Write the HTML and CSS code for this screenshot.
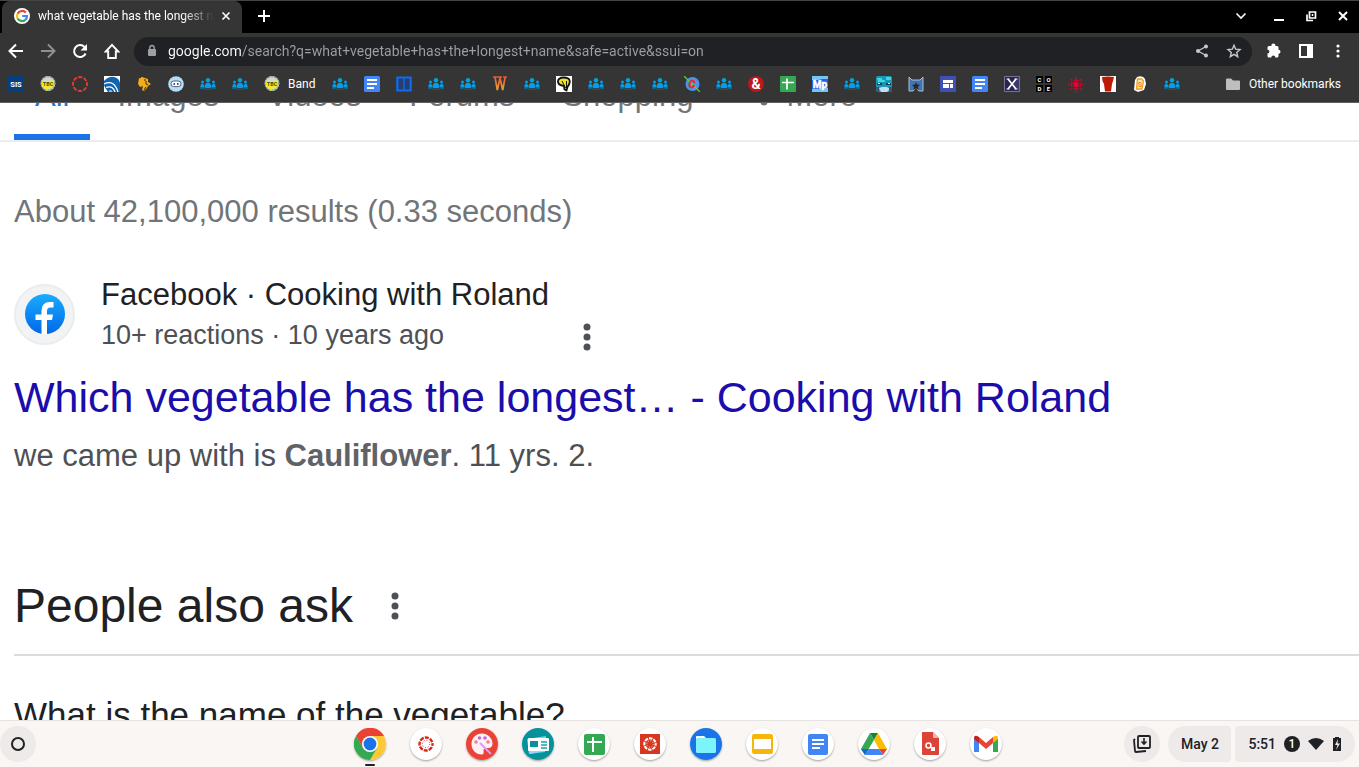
FILE: index.html
```
<!DOCTYPE html>
<html lang="en">
  <head>
    <meta charset="utf-8">
    <title>what vegetable has the longest name - Google Search</title>
    <link rel="stylesheet" href="styles.css">
  </head>
  <body>
    <!-- Shared icons -->
    <svg class="sprite" aria-hidden="true">
      <symbol id="people" viewBox="0 0 16 16">
        <g fill="#089de3">
          <circle cx="8" cy="4.200" r="2.200"/><path d="M4.600 10.500c0-5 6.800-5 6.800 0L10.500 12h-5z"/>
          <circle cx="2.500" cy="5.900" r="1.500"/><path d="M.3 11.500c-.3-5 4.200-5 4.200 0z"/>
          <circle cx="13.500" cy="5.900" r="1.500"/><path d="M11.500 11.500c0-5 4.500-5 4.200 0z"/>
        </g>
        <path d="M0 12.400q8 1.800 16 0" fill="none" stroke="#17658c" stroke-width="1"/>
      </symbol>
      <symbol id="tbc" viewBox="0 0 16 16">
        <circle cx="8" cy="7.500" r="7.400" fill="#d3d8cf"/>
        <circle cx="8" cy="7.500" r="6.600" fill="none" stroke="#7f9487" stroke-width="1" stroke-dasharray="2 1"/>
        <path d="M1.500 5.500L14 4.500l-1 6-4 1.500-2.500 3-1.500-4-3-.5z" fill="#f6ee10"/>
        <text x="8" y="9.500" font-size="5.500" text-anchor="middle" class="icon-text" fill="#3b4a20">TBC</text>
      </symbol>
      <symbol id="docs" viewBox="0 0 16 16">
        <rect width="16" height="16" rx="1.500" fill="#4285f4"/>
        <path d="M3 4h10M3 8h10M3 12h7" stroke="#fff" stroke-width="1.800"/>
      </symbol>
      <symbol id="sheets" viewBox="0 0 16 16">
        <rect width="16" height="16" rx="1" fill="#34a853"/>
        <path d="M2 6.500h12M7 2.500v11" stroke="#fff" stroke-width="1.700"/>
      </symbol>
      <symbol id="kebab" viewBox="0 0 8 28">
        <circle cx="4" cy="4" r="3.500"/><circle cx="4" cy="14" r="3.500"/><circle cx="4" cy="24" r="3.500"/>
      </symbol>
      <symbol id="canvas" viewBox="0 0 16 16">
        <circle cx="8" cy="8" r="6.500" fill="none" stroke="currentColor" stroke-width="2.400" stroke-dasharray="4 1.105" stroke-dashoffset="2"/>
        <circle cx="8" cy="8" r="3.700" fill="none" stroke="currentColor" stroke-width="1" stroke-dasharray="1 1.906"/>
      </symbol>
    </svg>

    <header class="browser">
      <div class="tab-strip">
        <div class="tab">
          <svg width="16" height="16" viewBox="0 0 16 16">
            <circle cx="8" cy="8" r="8" fill="#fff" stroke="none"/>
            <g fill="none" stroke-width="2.200">
              <path d="M11.800 4.600A5 5 0 0 0 3.600 5.700" stroke="#ea4335"/>
              <path d="M3.600 5.700a5 5 0 0 0 0 4.700" stroke="#fbbc05"/>
              <path d="M3.600 10.400a5 5 0 0 0 7.700 1.400" stroke="#34a853"/>
              <path d="M11.300 11.800A5 5 0 0 0 13 8H8.200" stroke="#4285f4"/>
            </g>
          </svg>
          <span class="tab-title">what vegetable has the longest name - Google Search</span>
          <button class="tab-close" aria-label="Close tab">
            <svg width="16" height="16" viewBox="0 0 16 16"><path d="M4.500 4.500l7 7M11.500 4.500l-7 7"/></svg>
          </button>
        </div>
        <button class="new-tab" aria-label="New tab">
          <svg width="16" height="16" viewBox="0 0 16 16"><path d="M8 2v12M2 8h12" stroke-width="2"/></svg>
        </button>
        <div class="window-buttons">
          <button class="tab-search" aria-label="Search tabs">
            <svg width="16" height="16" viewBox="0 0 16 16"><path d="M3.500 5.500L8 10l4.500-4.500"/></svg>
          </button>
          <button aria-label="Minimize">
            <svg width="16" height="16" viewBox="0 0 16 16"><path d="M3 12h10" stroke-width="2"/></svg>
          </button>
          <button aria-label="Restore">
            <svg width="16" height="16" viewBox="0 0 16 16"><path d="M6.500 4h6v6h-6zM4 6.500v6h6" stroke-width="1.700"/><path d="M9.500 6v2" stroke-width="1.500"/></svg>
          </button>
          <button aria-label="Close">
            <svg width="16" height="16" viewBox="0 0 16 16"><path d="M4 4l8 8M12 4l-8 8" stroke-width="2"/></svg>
          </button>
        </div>
      </div>

      <div class="toolbar">
        <button aria-label="Back">
          <svg width="16" height="16" viewBox="0 0 16 16"><path d="M15 8H2M8 1.500L1.500 8 8 14.500" stroke-width="2"/></svg>
        </button>
        <button class="disabled" aria-label="Forward" disabled>
          <svg width="16" height="16" viewBox="0 0 16 16"><path d="M1 8h13M8 1.500L14.500 8 8 14.500" stroke-width="2"/></svg>
        </button>
        <button aria-label="Reload">
          <svg width="16" height="16" viewBox="0 0 16 16"><path d="M13.600 10.500A6 6 0 1 1 12.500 4" stroke-width="2"/><path d="M15 1v6.500H8.500z" fill="#fff" stroke="none"/></svg>
        </button>
        <button aria-label="Home">
          <svg width="16" height="16" viewBox="0 0 16 16"><path d="M8 1.800L1.800 8.500h2.400V15h7.600V8.500h2.400z" stroke-width="1.900"/></svg>
        </button>
        <div class="omnibox">
          <svg width="16" height="16" viewBox="0 0 16 16"><rect x="4" y="6" width="8" height="7" rx="1" fill="#9aa0a6" stroke="none"/><path d="M5.800 6.500V4.700a2.200 2.200 0 0 1 4.400 0v1.800" stroke="#9aa0a6" stroke-width="1.400"/></svg>
          <input class="url" type="text" aria-label="Address" value="google.com/search?q=what+vegetable+has+the+longest+name&amp;safe=active&amp;ssui=on">
          <button aria-label="Share">
            <svg width="16" height="16" viewBox="0 0 16 16"><path d="M12 3.500L4 8l8 4.500" stroke="#c8c8c8" stroke-width="1.300"/><g fill="#c8c8c8" stroke="none"><circle cx="12" cy="3.500" r="2"/><circle cx="4" cy="8" r="2"/><circle cx="12" cy="12.500" r="2"/></g></svg>
          </button>
          <button aria-label="Bookmark this page">
            <svg width="16" height="16" viewBox="0 0 16 16"><path d="M8 2.200l1.700 4 4.300.4-3.300 2.800 1 4.300L8 11.400l-3.700 2.300 1-4.300L2 6.600l4.300-.4z" stroke="#c8c8c8" stroke-width="1.400"/></svg>
          </button>
        </div>
        <button aria-label="Extensions">
          <svg width="16" height="16" viewBox="0 0 16 16"><path d="M1.500 4.500q0-1.500 1.500-1.500h2.500a2 2 0 1 1 3.800 0H11q1.500 0 1.500 1.500v2.300a2 2 0 1 1 0 4V13q0 1.500-1.500 1.500H9.300a2 2 0 0 0-4 0H3q-1.500 0-1.500-1.500v-2.500a1.900 1.900 0 0 0 0-3.800z" fill="#fff" stroke="none"/></svg>
        </button>
        <button aria-label="Side panel">
          <svg width="16" height="16" viewBox="0 0 16 16"><path d="M2 2h12v12H2z" stroke-width="2"/><path d="M9 2h5v12H9z" fill="#fff" stroke="none"/></svg>
        </button>
        <button aria-label="Menu">
          <svg width="16" height="16" viewBox="0 0 16 16"><g fill="#fff" stroke="none"><circle cx="8" cy="3" r="1.600"/><circle cx="8" cy="8" r="1.600"/><circle cx="8" cy="13" r="1.600"/></g></svg>
        </button>
      </div>

      <nav class="bookmarks" aria-label="Bookmarks">
        <a href="#" aria-label="SIS"><svg viewBox="0 0 16 16"><rect width="16" height="16" fill="#05407c"/><text x="8" y="10.800" font-size="7.500" text-anchor="middle" class="icon-text" fill="#fff">SIS</text></svg></a>
        <a href="#" aria-label="TBC"><svg><use href="#tbc"/></svg></a>
        <a href="#" aria-label="Canvas"><svg viewBox="0 0 16 16"><circle cx="8" cy="8" r="7" fill="none" stroke="#e33b2e" stroke-width="1.900" stroke-dasharray="4.200 1.297" stroke-dashoffset="2"/></svg></a>
        <a href="#" aria-label="Library"><svg viewBox="0 0 16 16"><rect width="16" height="16" fill="#fff"/><path d="M0 5Q5 0 10 1t6 6v9H2L0 9z" fill="#1064ad"/><path d="M0 8q10-5 14 8M2 11.500q7-2.500 9 4.500" fill="none" stroke="#fff" stroke-width="1.300"/><path d="M0 10l4 6H0z" fill="#fff"/><path d="M5 14.500q2.500-1.500 3.500 1.500H5z" fill="#9cc3e6"/></svg></a>
        <a href="#" aria-label="Mascot"><svg viewBox="0 0 16 16"><path d="M3 2l3-1 3 1 3 1v3l3 2-3 2-1 2-3 3-2-1 1-4-3 1-2-3z" fill="#f2ad18"/><path d="M3 2l2-1M10 5v3l2 1M8 4h2M8 14l2-3" stroke="#352610" stroke-width="1" fill="none"/></svg></a>
        <a href="#" aria-label="Robot"><svg viewBox="0 0 16 16"><circle cx="8" cy="8" r="7.800" fill="#b5dcf9"/><rect x="3" y="5" width="10" height="5.600" rx="2.800" fill="#fff" stroke="#5a6080" stroke-width="1"/><path d="M5.500 8h1.500M9 8h1.500" stroke="#454b69" stroke-width="1.800"/></svg></a>
        <a href="#" aria-label="Group"><svg><use href="#people"/></svg></a>
        <a href="#" aria-label="Group"><svg><use href="#people"/></svg></a>
        <a href="#"><svg><use href="#tbc"/></svg><span>Band</span></a>
        <a href="#" aria-label="Group"><svg><use href="#people"/></svg></a>
        <a href="#" aria-label="Docs"><svg><use href="#docs"/></svg></a>
        <a href="#" aria-label="Book"><svg viewBox="0 0 16 16"><path d="M1.300 1.500h13.400v13H1.300z" fill="#263d70" stroke="#0f6bf0" stroke-width="2.200"/><path d="M8 2v12" stroke="#0f6bf0" stroke-width="1.400"/></svg></a>
        <a href="#" aria-label="Group"><svg><use href="#people"/></svg></a>
        <a href="#" aria-label="Group"><svg><use href="#people"/></svg></a>
        <a href="#" aria-label="W"><svg viewBox="0 0 16 16"><defs><linearGradient id="flame" x2="0" y2="1"><stop stop-color="#e75a2d"/><stop offset="1" stop-color="#e8a43b"/></linearGradient></defs><path d="M1 1h5M6 1h4M11 1h4M3 1l2.300 13L8 2l2.700 12L13.200 1" fill="none" stroke="url(#flame)" stroke-width="1.700"/></svg></a>
        <a href="#" aria-label="Group"><svg><use href="#people"/></svg></a>
        <a href="#" aria-label="Bulb"><svg viewBox="0 0 16 16"><rect width="16" height="16" fill="#fff"/><path d="M8 10C0 9 0 1.500 7.500 1.500S15 6 11.500 11l-1 3.500-2-1z" fill="#efdf2e" stroke="#111" stroke-width="1.800"/><path d="M6 5l3.500 7M10.500 5v7" stroke="#111" stroke-width="1"/></svg></a>
        <a href="#" aria-label="Group"><svg><use href="#people"/></svg></a>
        <a href="#" aria-label="Group"><svg><use href="#people"/></svg></a>
        <a href="#" aria-label="Group"><svg><use href="#people"/></svg></a>
        <a href="#" aria-label="C"><svg viewBox="0 0 16 16"><circle cx="8.500" cy="8" r="7" fill="#4695ed"/><path d="M0 0l16 16" stroke="#65c443" stroke-width="1.300"/><text x="8" y="12" font-size="11" font-style="italic" text-anchor="middle" class="icon-text" fill="#ee2c25" stroke="#ee2c25" stroke-width=".6">C</text></svg></a>
        <a href="#" aria-label="Group"><svg><use href="#people"/></svg></a>
        <a href="#" aria-label="Ampersand"><svg viewBox="0 0 16 16"><circle cx="8" cy="8" r="8" fill="#bb171d"/><text x="8" y="13" font-size="14" text-anchor="middle" class="icon-text" fill="#fff">&amp;</text></svg></a>
        <a href="#" aria-label="Sheets"><svg><use href="#sheets"/></svg></a>
        <a href="#" aria-label="Mp"><svg viewBox="0 0 16 16"><rect width="16" height="16" fill="#1f63ee"/><path d="M0 0h16v3H7v1H0zM0 13h7v-1h9v4H0z" fill="#75c4f5"/><text x="8" y="11.500" font-size="10" text-anchor="middle" class="icon-text" fill="#fff" stroke="#fff" stroke-width=".5">Mp</text></svg></a>
        <a href="#" aria-label="Group"><svg><use href="#people"/></svg></a>
        <a href="#" aria-label="Monster"><svg viewBox="0 0 16 16"><rect width="16" height="16" rx="2" fill="#1799b5"/><path d="M1 2h5v2h4V1h5v3H9v2H2z" fill="#3fd5e5"/><path d="M1 7h5v2H1zM10 7h5v2h-5z" fill="#24384b"/><path d="M2 7h2v1H2zM12 7h2v1h-2z" fill="#fff"/><path d="M3 12l3-1h5l3 2-3 3H5z" fill="#c1dcf5"/><path d="M0 11h3v5H1zM13 11h3v4l-3 1z" fill="#3f5566"/></svg></a>
        <a href="#" aria-label="Castle"><svg viewBox="0 0 16 16"><path d="M1 1v14h4l3-3 3 3h4V1l-3 3H4z" fill="#3f74b7" stroke="#aebfcd" stroke-width="1"/><path d="M8 6l1.200 2.500 2.800.3-2 2 .5 3L8 12.500 5.500 14l.5-3-2-2 2.800-.5z" fill="#2b2925"/></svg></a>
        <a href="#" aria-label="Sites"><svg viewBox="0 0 16 16"><rect width="16" height="16" fill="#3f51b5"/><path d="M3 4h10v3H3zM3 8h6v4H3zM10 8h3v4h-3z" fill="#fff"/></svg></a>
        <a href="#" aria-label="Docs"><svg><use href="#docs"/></svg></a>
        <a href="#" aria-label="X"><svg viewBox="0 0 16 16"><path d="M.5.500h15v15H.5z" fill="#292451" stroke="#77758d"/><path d="M8 8l7-7v14z" fill="#3c376f"/><path d="M4 3l8 10M12 3L4 13" stroke="#fff" stroke-width="1.700"/><path d="M2.500 3h3M10.500 3h3M2.500 13h3M10.500 13h3" stroke="#fff" stroke-width="1"/></svg></a>
        <a href="#" aria-label="Code"><svg viewBox="0 0 16 16"><path d="M0 0h7v7H0zM9 0h7v7H9zM0 9h7v7H0zM9 9h7v7H9z" fill="#000"/><g class="icon-text" font-size="6" fill="#fff" text-anchor="middle"><text x="3.500" y="6">C</text><text x="12.500" y="6">O</text><text x="3.500" y="15">D</text><text x="12.500" y="15">E</text></g></svg></a>
        <a href="#" aria-label="Radio"><svg viewBox="0 0 16 16"><circle cx="8" cy="8.500" r="2.700" fill="#e2062f"/><g fill="none" stroke="#d4052d"><circle cx="8" cy="8.500" r="4.600" stroke-width="1.500" stroke-dasharray="5.200 2.025" stroke-dashoffset="2.600"/><circle cx="8" cy="8.500" r="6.900" stroke-width="1.200" stroke-dasharray="2.600 2.819" stroke-dashoffset="1.300"/></g></svg></a>
        <a href="#" aria-label="Cup"><svg viewBox="0 0 16 16"><rect width="16" height="16" fill="#fff"/><path d="M2 1q6-1 12 0l-1 4-1 3-1 7.500H5L4 8 2.500 5z" fill="#c01807"/></svg></a>
        <a href="#" aria-label="Scratch"><svg viewBox="0 0 16 16"><path d="M5 1q6-2 8 2l1 5-2 6-6 2-4-2 1-10z" fill="#fff"/><path d="M5.500 3h4l2 2-1.500 8H4.500z" fill="#fce4b8" stroke="#f49a22" stroke-width="1.300"/><text x="7.800" y="11" font-size="7" text-anchor="middle" class="icon-text" fill="#f08a15">S</text></svg></a>
        <a href="#" aria-label="Group"><svg><use href="#people"/></svg></a>
        <a class="other" href="#"><svg viewBox="0 0 16 16"><path d="M1 3.500Q1 2.500 2 2.500h4l2 2h6q1 0 1 1v7.500q0 1-1 1H2q-1 0-1-1z" fill="#bebebe"/></svg><span>Other bookmarks</span></a>
      </nav>
    </header>

    <main class="page">
      <nav class="tabs" aria-label="Search types">
        <a class="active" href="#">All</a>
        <a href="#">Images</a>
        <a href="#">Videos</a>
        <a href="#">Forums</a>
        <a href="#">Shopping</a>
        <a class="more" href="#"><svg width="8" height="28"><use href="#kebab"/></svg>More</a>
      </nav>

      <p class="stats">About 42,100,000 results (0.33 seconds)</p>

      <article class="result">
        <div class="source">
          <div class="avatar">
            <svg width="40" height="40" viewBox="0 0 40 40">
              <defs><linearGradient id="fb" x2="0" y2="1"><stop stop-color="#18acfe"/><stop offset="1" stop-color="#0267e9"/></linearGradient></defs>
              <circle cx="20" cy="20" r="20" fill="url(#fb)"/>
              <path d="M16.500 40V26h-6v-5.500h6V17q0-9 8.500-9h3.500v5.500h-3q-3.500 0-3.500 3.500v3.500h6l-1 5.500h-5v14z" fill="#fff"/>
            </svg>
          </div>
          <div class="source-text">
            <span class="site">Facebook · Cooking with Roland</span>
            <span class="meta">10+ reactions · 10 years ago</span>
          </div>
          <button class="options" aria-label="About this result"><svg width="8" height="28"><use href="#kebab"/></svg></button>
        </div>
        <h3><a href="#">Which vegetable has the longest… - Cooking with Roland</a></h3>
        <p class="snippet">we came up with is <b>Cauliflower</b>. 11 yrs. 2.</p>
      </article>

      <section class="also-ask">
        <div class="also-ask-head">
          <h2>People also ask</h2>
          <button class="options" aria-label="About these questions"><svg width="8" height="28"><use href="#kebab"/></svg></button>
        </div>
        <button class="question">What is the name of the vegetable?</button>
      </section>
    </main>

    <footer class="shelf">
      <button class="launcher" aria-label="Launcher">
        <svg width="16" height="16" viewBox="0 0 16 16"><circle cx="8" cy="8" r="6" fill="none" stroke="#202124" stroke-width="2"/></svg>
      </button>

      <div class="apps">
        <button class="running" aria-label="Chrome"><svg viewBox="0 0 32 32">
          <circle cx="16" cy="16" r="16" fill="#fcc934"/>
          <path d="M2.100 8A16 16 0 0 1 30 8H16L9 20z" fill="#ea4335"/>
          <path d="M2.100 8A16 16 0 0 0 16 32l7-12-7 4-7-4z" fill="#34a853"/>
          <circle cx="16" cy="16" r="8" fill="#fff"/><circle cx="16" cy="16" r="6.400" fill="#1a73e8"/></svg></button>
        <button class="red" aria-label="Canvas"><svg viewBox="0 0 32 32"><use href="#canvas" x="8" y="8" width="16" height="16"/></svg></button>
        <button aria-label="Canvas paint"><svg viewBox="0 0 32 32"><circle cx="16" cy="16" r="16" fill="#ea4335"/><path d="M16 5.500c-6 0-10.500 4.500-10.500 10.500S10 26.500 15.500 26.500c3 0 2-2.500 2-4s1-2.500 3-2.500h2c2.500 0 4-2 4-4.500 0-5.500-5-10-10.500-10z" fill="#fff0f4"/><g fill="#ee7d9b"><circle cx="10" cy="14" r="1.800"/><circle cx="22" cy="14" r="1.800"/></g><g fill="#b56fd0"><circle cx="13.500" cy="10" r="1.800"/><circle cx="19" cy="10" r="1.800"/></g><path d="M14 15l11 11" stroke="#df9af3" stroke-width="2"/></svg></button>
        <button aria-label="News"><svg viewBox="0 0 32 32"><circle cx="16" cy="16" r="16" fill="#05929a"/><path d="M5 11l19-3-1 16-16 2z" fill="#5ce1e6"/><path d="M7 22h19l-18 4z" fill="#a5cef8"/><rect x="6" y="10" width="21" height="13" rx="1" fill="#fff"/><path d="M8 13h8v6H8z" fill="#05929a"/><path d="M19 14h6M19 17h6M19 20h6" stroke="#17a4aa" stroke-width="1.500"/></svg></button>
        <button aria-label="Sheets"><svg viewBox="0 0 32 32"><rect x="6" y="6" width="21" height="21" rx="2" fill="#34a853"/><path d="M9 14h15M15 9v15" stroke="#fff" stroke-width="2"/></svg></button>
        <button class="white" aria-label="Canvas LMS"><svg viewBox="0 0 32 32"><rect x="6" y="6" width="20" height="20" fill="#d8371f"/><use href="#canvas" x="9" y="9" width="14" height="14"/></svg></button>
        <button aria-label="Files"><svg viewBox="0 0 32 32"><circle cx="16" cy="16" r="16" fill="#1a73e8"/><path d="M6 9q0-1 1-1h7l3 3H6z" fill="#fff"/><rect x="6" y="10" width="20" height="15" rx="1.500" fill="#7df3fa"/></svg></button>
        <button aria-label="Slides"><svg viewBox="0 0 32 32"><rect x="6" y="6" width="21" height="20" rx="2" fill="#f7b60b"/><rect x="8" y="11" width="17" height="10" fill="#fff"/></svg></button>
        <button aria-label="Docs"><svg viewBox="0 0 32 32"><rect x="6" y="6" width="20" height="21" rx="2" fill="#4285f4"/><path d="M10 12h12M10 16h12M10 20h8" stroke="#fff" stroke-width="2"/></svg></button>
        <button aria-label="Drive"><svg viewBox="0 0 32 32"><path d="M12 5h8l-4 7z" fill="#188038"/><path d="M12 5L3 21l4 6 9-15z" fill="#34a853"/><path d="M20 5l9 16h-8l-5-9z" fill="#fbbc04"/><path d="M3 21h8l-4 6z" fill="#1967d2"/><path d="M11 21h10l4 6H7z" fill="#4285f4"/><path d="M21 21h8l-4 6z" fill="#ea4335"/></svg></button>
        <button aria-label="Drawings"><svg viewBox="0 0 32 32"><path d="M8 4h11l6 6v16q0 1-1 1H9q-1 0-1-1z" fill="#db4437"/><path d="M19 4v6h6z" fill="#f1b5ae"/><circle cx="14.500" cy="17.500" r="2.500" fill="none" stroke="#fff" stroke-width="1.500"/><rect x="17" y="19" width="4" height="4" fill="#fff"/></svg></button>
        <button aria-label="Gmail"><svg viewBox="0 0 32 32"><path d="M4 10v14h5V14z" fill="#4285f4"/><path d="M28 10v14h-5V14z" fill="#34a853"/><path d="M9 9l7 6 7-6v6l-7 6-7-6z" fill="#ea4335"/><path d="M4 10q0-4 5-1v6l-5-4z" fill="#c5221f"/><path d="M28 10q0-4-5-1v6l5-4z" fill="#fbbc04"/></svg></button>
      </div>

      <div class="status">
        <button class="holding" aria-label="Tote">
          <svg width="20" height="20" viewBox="0 0 20 20"><g fill="none" stroke="#202124" stroke-width="1.800"><rect x="6" y="2" width="12" height="12" rx="1"/><path d="M3 5l-1 1 1 11q0 1 1 1l10-1"/></g><path d="M12 4v5M9.500 7.500L12 10l2.500-2.500" fill="none" stroke="#202124" stroke-width="1.600"/></svg>
        </button>
        <button class="date">May 2</button>
        <button class="tray">
          <span>5:51</span>
          <span class="badge">1</span>
          <svg width="16" height="16" viewBox="0 0 16 16"><path d="M0 5q8-6 16 0L8 14z" fill="#202124"/></svg>
          <svg width="10" height="16" viewBox="0 0 10 16"><path d="M1 2h2V1h4v1h2v13H1z" fill="#202124"/><path d="M6 3L3 9h2.500L4 14l4-6.500H5.500z" fill="#eeeae9"/></svg>
        </button>
      </div>
    </footer>
  </body>
</html>
```
FILE: styles.css
```
* {
  box-sizing: border-box;
}

body {
  margin: 0;
  height: 100vh;
  display: flex;
  flex-direction: column;
  overflow: hidden;
  font-family: "Liberation Sans", Arial, sans-serif;
  background-color: #fff;
}

button {
  display: flex;
  align-items: center;
  justify-content: center;
  padding: 0;
  border: none;
  background: none;
  font: inherit;
  color: inherit;
  cursor: pointer;
}

a {
  text-decoration: none;
}

h2, h3, p {
  margin: 0;
  font-weight: normal;
}

.sprite {
  display: none;
}

.icon-text {
  font-family: Roboto, sans-serif;
  font-weight: bold;
}

/* Browser window */
.browser {
  flex: none;
  background-color: #353535;
  border-bottom: 1px solid #5f5f5f;
  font-family: Roboto, sans-serif;
  font-size: 12px;
  color: #fff;
}

.tab-strip {
  display: flex;
  align-items: center;
  height: 33px;
  padding-left: 2px;
  border-top: 1px solid #444;
  background-color: #000;
}

.tab-strip svg,
.toolbar svg {
  fill: none;
  stroke: #fff;
  stroke-width: 1.6;
  flex: none;
}

.tab {
  display: flex;
  align-items: center;
  width: 240px;
  height: 32px;
  padding: 0 8px 2px 12px;
  border-radius: 8px 8px 0 0;
  background-color: #353535;
}

.tab-title {
  flex: 1;
  margin-left: 8px;
  overflow: hidden;
  white-space: nowrap;
  -webkit-mask-image: linear-gradient(to left, transparent, #000 32px);
  mask-image: linear-gradient(to left, transparent, #000 32px);
}

.tab-close {
  margin-left: 4px;
}

.new-tab,
.window-buttons {
  padding-bottom: 2px;
}

.new-tab {
  margin-left: 14px;
}

.window-buttons {
  display: flex;
  margin-left: auto;
}

.window-buttons button {
  width: 32px;
}

.window-buttons .tab-search {
  margin-right: 6px;
}

.toolbar {
  display: flex;
  align-items: center;
  height: 36px;
  padding-right: 5px;
}

.toolbar button {
  width: 32px;
  height: 28px;
}

.toolbar .disabled {
  opacity: 0.45;
}

.omnibox {
  flex: 1;
  display: flex;
  align-items: center;
  height: 29px;
  margin: 0 6px;
  padding: 0 2px 0 10px;
  border-radius: 15px;
  background-color: #202124;
}

/* Host is white, the path is grey */
.url {
  flex: 1;
  min-width: 0;
  margin-left: 8px;
  padding: 0;
  border: none;
  outline: none;
  font-family: Roboto, sans-serif;
  font-size: 14px;
  color: transparent;
  background: linear-gradient(to right, #fff 73px, #9aa0a6 73px);
  -webkit-background-clip: text;
  background-clip: text;
}

.bookmarks {
  display: flex;
  gap: 16px;
  height: 33px;
  padding: 7px 18px 0 8px;
}

.bookmarks a {
  display: flex;
  align-items: center;
  gap: 8px;
  height: 16px;
  color: #fff;
  white-space: nowrap;
}

.bookmarks svg {
  width: 16px;
  height: 16px;
  flex: none;
}

.bookmarks span {
  min-width: 28px;
}

.bookmarks .other {
  margin-left: auto;
}

/* Search results */
.page {
  flex: 1;
  min-height: 0;
  overflow: hidden;
  padding-left: 14px;
  color: #202124;
}

/* Scrolled up under the bookmarks */
.tabs {
  display: flex;
  gap: 6px;
  height: 64px;
  margin: -25px 0 0 -14px;
  padding-left: 14px;
  border-bottom: 2px solid #ebedef;
  font-size: 31px;
  line-height: 36px;
}

.tabs a {
  padding: 0 21px;
  color: #70757a;
}

.tabs .active {
  color: #1a73e8;
  border-bottom: 6px solid #1a73e8;
}

.tabs .more {
  display: flex;
  gap: 18px;
  padding-left: 40px;
}

.tabs svg {
  fill: #70757a;
}

.stats {
  margin-top: 52px;
  font-size: 31px;
  line-height: 36px;
  color: #70757a;
}

.result {
  margin-top: 47px;
}

.source {
  display: flex;
  align-items: center;
}

.avatar {
  display: flex;
  align-items: center;
  justify-content: center;
  width: 61px;
  height: 61px;
  margin-right: 26px;
  border: 2px solid #ebecee;
  border-radius: 50%;
  background-color: #f1f3f4;
}

.source-text {
  display: flex;
  flex-direction: column;
  gap: 6px;
}

.site {
  font-size: 31px;
  line-height: 36px;
}

.meta {
  font-size: 27px;
  line-height: 32px;
  color: #4d5156;
}

.options {
  width: 8px;
  height: 28px;
  fill: #4d5156;
}

.source .options {
  align-self: flex-end;
  margin-left: 34px;
}

.result h3 {
  margin-top: 20px;
  font-size: 43px;
  line-height: 52px;
}

.result h3 a {
  color: #1a0dab;
}

.snippet {
  margin-top: 15px;
  font-size: 31px;
  line-height: 36px;
  color: #4d5156;
}

.snippet b {
  color: #5f6368;
}

.also-ask {
  margin-top: 103px;
}

.also-ask-head {
  display: flex;
  align-items: center;
  gap: 38px;
  height: 79px;
  padding-bottom: 20px;
  border-bottom: 2px solid #dadce0;
}

.also-ask h2 {
  font-size: 48px;
  line-height: 56px;
}

.question {
  margin-top: 39px;
  font-size: 35px;
  line-height: 40px;
}

/* Shelf */
.shelf {
  flex: none;
  display: grid;
  grid-template-columns: 1fr auto 1fr;
  align-items: center;
  height: 47px;
  padding-right: 4px;
  border-top: 1px solid #e5e2e1;
  background-color: #faf6f4;
  font-family: Roboto, sans-serif;
  font-size: 14px;
  font-weight: 500;
  color: #202124;
}

.launcher,
.holding {
  width: 36px;
  height: 36px;
  border-radius: 50%;
  background-color: #eeeae9;
}

.apps {
  display: flex;
  gap: 24px;
}

.apps button {
  position: relative;
  width: 32px;
  height: 32px;
  border-radius: 50%;
  background-color: #fff;
  box-shadow: 0 1px 2px rgba(0, 0, 0, 0.35);
}

.apps svg {
  width: 32px;
  height: 32px;
}

.apps .red {
  color: #d8281c;
}

.apps .white {
  color: #fff;
}

.running::after {
  content: "";
  position: absolute;
  left: 11px;
  bottom: -6px;
  width: 10px;
  height: 2px;
  border-radius: 1px;
  background-color: #202124;
}

.status {
  display: flex;
  justify-content: flex-end;
}

.date,
.tray {
  height: 36px;
  background-color: #eeeae9;
}

.date {
  width: 63px;
  margin: 0 4px 0 8px;
  border-radius: 18px 4px 4px 18px;
}

.tray {
  gap: 8px;
  padding: 0 13px;
  border-radius: 4px 18px 18px 4px;
}

.badge {
  width: 16px;
  height: 16px;
  border-radius: 50%;
  background-color: #202124;
  color: #fff;
  font-size: 12px;
  line-height: 16px;
}
```
